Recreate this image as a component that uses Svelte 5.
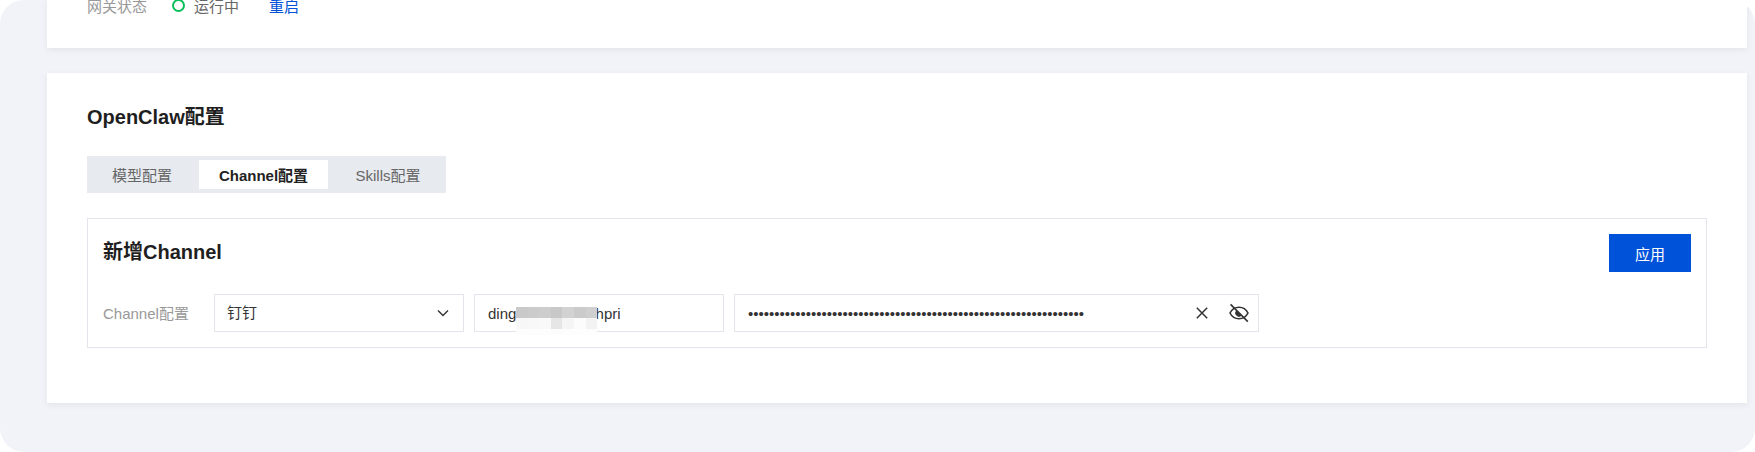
<script>
    let channel = '钉钉';
    let appId = 'dingxxxxxxxxx0ihpri';
    let secret = 'x'.repeat(64);
    const tabs = ['模型配置', 'Channel配置', 'Skills配置'];
    let active = 1;

    // pixelated patch over the app id
    const mosaic = [
        ['#c9c9c9', '#cbcbcb', '#cdcdcd', '#c8c8c8', '#d2d2d2', '#cbcbcb', '#cfcfcf'],
        ['#f7f7f7', '#f8f8f8', '#f9f9f9', '#e6e6e6', '#f5f5f5', '#fcfcfc', '#f3f3f3'],
        ['#fdfdfd', '#fdfdfd', '#fdfdfd', '#fcfcfc', '#fdfdfd', '#fdfdfd', '#fdfdfd']
    ];
</script>

<div class="page">
    <section class="card status">
        <div class="status-row">
            <span class="status-label">网关状态</span>
            <span class="ring"></span>
            <span class="status-text">运行中</span>
            <a class="link" href="#restart">重启</a>
        </div>
    </section>

    <section class="card config">
        <h2>OpenClaw配置</h2>

        <div class="tabs">
            {#each tabs as tab, i}
                <button class="tab" class:active={i === active} on:click={() => (active = i)}>{tab}</button>
            {/each}
        </div>

        <div class="box">
            <div class="box-head">
                <h3>新增Channel</h3>
                <button class="apply">应用</button>
            </div>
            <div class="form-row">
                <span class="form-label">Channel配置</span>
                <div class="field select">
                    <span class="value">{channel}</span>
                    <svg width="16" height="16" viewBox="0 0 16 16" fill="none">
                        <path d="M3 5.600l5 5 5-5" stroke="#333" stroke-width="1.4" />
                    </svg>
                </div>
                <div class="field text">
                    <input type="text" value={appId} />
                    <div class="mosaic">
                        {#each mosaic as row}
                            {#each row as c}
                                <i style="background:{c}"></i>
                            {/each}
                        {/each}
                    </div>
                </div>
                <div class="field secret">
                    <input type="password" value={secret} />
                    <svg class="clear" width="16" height="16" viewBox="0 0 16 16" fill="none">
                        <path d="M2.800 2.800l10.400 10.400M13.200 2.800L2.800 13.200" stroke="#333" stroke-width="1.500" />
                    </svg>
                    <svg class="eye" width="20" height="20" viewBox="0 0 20 20" fill="none">
                        <path d="M1 10C2.900 6.200 6.100 4.200 10 4.200s7.100 2 9 5.800c-1.900 3.800-5.100 5.800-9 5.800S2.900 13.800 1 10z" stroke="#333" stroke-width="1.600" />
                        <path d="M7.400 7.400a3.600 3.600 0 0 0 5.200 5.200z" fill="#333" />
                        <path d="M1.600 1.400l17.200 17.200" stroke="#333" stroke-width="1.600" />
                    </svg>
                </div>
            </div>
        </div>
    </section>
</div>

<style>
    :global(body) {
        background: #fff;
    }
    .page {
        box-sizing: border-box;
        height: 452px;
        overflow: hidden;
        padding: 0 8px 0 47px;
        background: #f2f3f8;
        border-radius: 24px;
        font-family: "Liberation Sans", "Noto Sans CJK SC", sans-serif;
        font-size: 15px;
        color: #333;
    }
    .card {
        box-sizing: border-box;
        background: #fff;
        box-shadow: 0 2px 6px rgba(54, 58, 80, 0.08);
    }
    .status {
        display: flex;
        align-items: flex-end;
        height: 48px;
        overflow: hidden;
        padding: 0 40px 32px;
    }
    .status-row {
        display: flex;
        align-items: center;
        height: 22px;
    }
    .status-label {
        width: 85px;
        color: #999;
    }
    .ring {
        box-sizing: border-box;
        width: 13px;
        height: 13px;
        margin-right: 9px;
        border: 2px solid #0abf5b;
        border-radius: 50%;
    }
    .status-text {
        width: 75px;
        color: #666;
    }
    .link {
        color: #0052d9;
        text-decoration: none;
    }
    .config {
        height: 330px;
        margin-top: 25px;
        padding: 33px 40px 0;
    }
    h2 {
        margin: 0;
        font-size: 20px;
        line-height: 22px;
        font-weight: 700;
        color: #1f1f1f;
    }
    .tabs {
        display: flex;
        box-sizing: border-box;
        width: 359px;
        height: 37px;
        margin-top: 28px;
        padding: 4px 0;
        background: #e7eaef;
    }
    .tab {
        width: 112px;
        border: none;
        padding: 0 2px 0 0;
        background: none;
        font: inherit;
        color: #666;
    }
    .tab.active {
        width: 129px;
        padding: 0;
        background: #fff;
        font-weight: 700;
        color: #222;
    }
    .tab:last-child {
        width: 118px;
        padding: 0 0 0 2px;
    }
    .box {
        box-sizing: border-box;
        height: 130px;
        margin-top: 25px;
        padding: 15px 15px 0;
        border: 1px solid #e3e5ec;
    }
    .box-head {
        display: flex;
        justify-content: space-between;
        align-items: center;
        height: 38px;
    }
    h3 {
        margin: 0 0 2px;
        font-size: 20px;
        line-height: 26px;
        font-weight: 700;
        color: #1f1f1f;
    }
    .apply {
        width: 82px;
        height: 38px;
        border: none;
        background: #0052d9;
        color: #fff;
        font: inherit;
    }
    .form-row {
        display: flex;
        align-items: center;
        margin-top: 22px;
    }
    .form-label {
        width: 111px;
        margin-bottom: 1px;
        color: #999;
    }
    .field {
        box-sizing: border-box;
        display: flex;
        align-items: center;
        height: 38px;
        padding: 0 12px 0 13px;
        border: 1px solid #e3e5ec;
    }
    .select {
        justify-content: space-between;
        width: 250px;
        margin-right: 10px;
        padding-left: 12px;
    }
    .value {
        margin-bottom: 3px;
    }
    .text {
        position: relative;
        width: 250px;
        margin-right: 10px;
    }
    .secret {
        width: 525px;
        padding-right: 9px;
    }
    input {
        flex: 1;
        min-width: 0;
        border: none;
        outline: none;
        padding: 0;
        font: inherit;
        color: #333;
        background: none;
    }
    .mosaic {
        position: absolute;
        left: 41px;
        top: 12px;
        display: grid;
        grid-template-columns: repeat(7, 11.6px);
        grid-template-rows: 11px 11px 6px;
    }
    .clear {
        margin: 0 19px 0 8px;
    }
</style>
